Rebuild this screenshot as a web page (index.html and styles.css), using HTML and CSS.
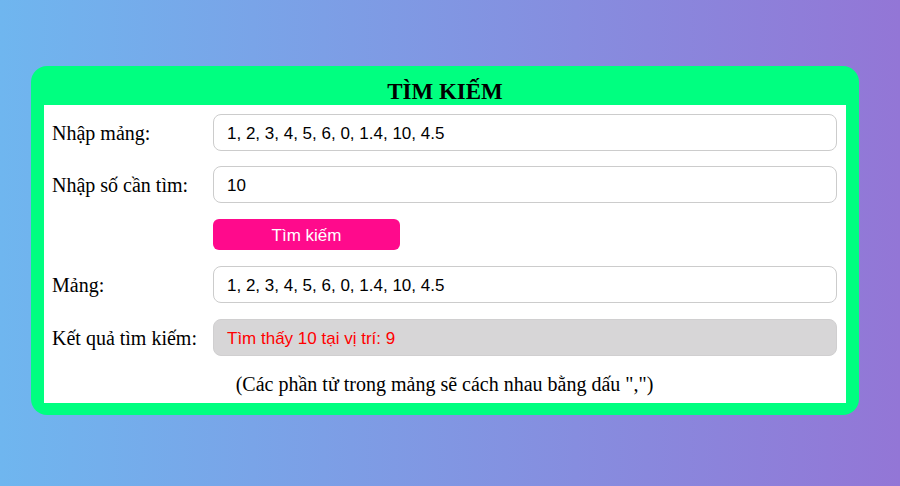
FILE: index.html
```html
<!DOCTYPE html>
<html lang="vi">
<head>
<meta charset="utf-8">
<title>Tìm kiếm</title>
<link rel="stylesheet" href="styles.css">
</head>
<body>
<div class="card">
  <h1 class="title">TÌM KIẾM</h1>
  <div class="panel">
    <div class="form">
      <label class="label">Nhập mảng:</label>
      <div class="field">1, 2, 3, 4, 5, 6, 0, 1.4, 10, 4.5</div>
      <label class="label">Nhập số cần tìm:</label>
      <div class="field">10</div>
      <div></div>
      <div class="btn-row"><button class="btn">Tìm kiếm</button></div>
      <label class="label">Mảng:</label>
      <div class="field">1, 2, 3, 4, 5, 6, 0, 1.4, 10, 4.5</div>
      <label class="label">Kết quả tìm kiếm:</label>
      <div class="field result">Tìm thấy 10 tại vị trí: 9</div>
    </div>
    <p class="note">(Các phần tử trong mảng sẽ cách nhau bằng dấu ",")</p>
  </div>
</div>
</body>
</html>
```

FILE: styles.css
```css
html {
  min-height: 100%;
  background: linear-gradient(to right, #6fb6ef, #9376d6);
}
body {
  margin: 0;
  min-height: 486px;
  background: linear-gradient(to right, #6fb6ef, #9376d6);
  font-family: "Liberation Serif", "Times New Roman", serif;
  overflow: hidden;
}
.card {
  box-sizing: border-box;
  width: 828px;
  margin: 66px 0 0 31px;
  padding: 13px 13px 12px 13px;
  background: #00ff80;
  border-radius: 16px;
}
.title {
  margin: 0;
  text-align: center;
  font-size: 23px;
  line-height: 26px;
  font-weight: bold;
  color: #000;
}
.panel {
  background: #fff;
  padding: 9px 9px 7px 8px;
}
.form {
  display: grid;
  grid-template-columns: 161px 1fr;
  row-gap: 16px;
  align-items: center;
}
.form > .field:first-of-type {
  margin-bottom: -1px;
}
.label {
  font-size: 20px;
  padding-top: 2px;
  color: #000;
}
.field {
  box-sizing: border-box;
  height: 37px;
  border: 1px solid #cccccc;
  border-radius: 8px;
  padding: 3px 13px 0 13px;
  display: flex;
  align-items: center;
  font-family: "Liberation Sans", Arial, sans-serif;
  font-size: 17px;
  color: #000;
  background: #fff;
}
.result {
  background: #d7d6d7;
  border-color: #d0cfd0;
  color: #ff0000;
}
.btn-row {
  display: flex;
}
.btn {
  width: 187px;
  height: 31px;
  border: none;
  border-radius: 6px;
  background: #ff0a8c;
  color: #fff;
  font-family: "Liberation Sans", Arial, sans-serif;
  font-size: 17px;
  padding: 3px 0 0 0;
}
.note {
  margin: 17px 0 0 0;
  text-align: center;
  font-size: 20px;
  line-height: 23px;
  color: #000;
}
```
